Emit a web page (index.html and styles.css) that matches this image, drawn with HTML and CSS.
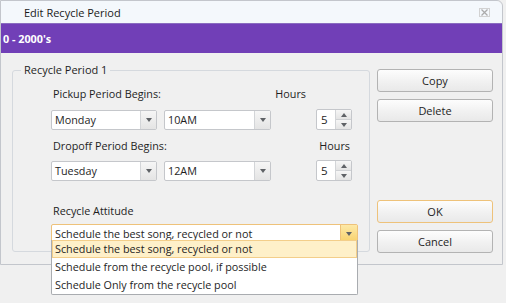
FILE: index.html
```html
<!DOCTYPE html>
<html>
<head>
<meta charset="utf-8">
<link rel="stylesheet" href="styles.css">
</head>
<body>
<div class="dialog">
  <div class="titlebar">
    <span class="title">Edit Recycle Period</span>
    <svg class="close" width="11" height="9" viewBox="0 0 11 9">
      <rect x="0.5" y="0.5" width="10" height="8" fill="none" stroke="#d2d2d2"/>
      <path d="M2.5 1.5 L8.5 7.5 M8.5 1.5 L2.5 7.5" stroke="#ababab" stroke-width="1.3"/>
    </svg>
  </div>
  <div class="banner">0 - 2000's</div>
  <div class="body">
    <fieldset class="group">
      <legend>Recycle Period 1</legend>
      <div class="inner">
        <div class="labels">
          <span class="lbl">Pickup Period Begins:</span>
          <span class="lbl hours-a">Hours</span>
        </div>
        <div class="controls">
          <div class="combo c1"><span class="val">Monday</span><span class="arrow"><i></i></span></div>
          <div class="combo c2"><span class="val">10AM</span><span class="arrow"><i></i></span></div>
          <div class="spin"><span class="val">5</span><span class="spinbtns"><span class="up"><i></i></span><span class="down"><i></i></span></span></div>
        </div>
        <div class="labels l2">
          <span class="lbl">Dropoff Period Begins:</span>
          <span class="lbl hours-b">Hours</span>
        </div>
        <div class="controls">
          <div class="combo c1"><span class="val">Tuesday</span><span class="arrow"><i></i></span></div>
          <div class="combo c2"><span class="val">12AM</span><span class="arrow"><i></i></span></div>
          <div class="spin"><span class="val">5</span><span class="spinbtns"><span class="up"><i></i></span><span class="down"><i></i></span></span></div>
        </div>
        <div class="labels l3">
          <span class="lbl">Recycle Attitude</span>
        </div>
        <div class="combo wide hot"><span class="val">Schedule the best song, recycled or not</span><span class="arrow"><i></i></span></div>
      </div>
    </fieldset>
    <div class="buttons">
      <button class="btn">Copy</button>
      <button class="btn">Delete</button>
      <div class="spacer"></div>
      <button class="btn default">OK</button>
      <button class="btn">Cancel</button>
    </div>
  </div>
</div>
<ul class="droplist">
  <li class="sel">Schedule the best song, recycled or not</li>
  <li>Schedule from the recycle pool, if possible</li>
  <li>Schedule Only from the recycle pool</li>
</ul>
</body>
</html>
```
FILE: styles.css
```css
* { box-sizing: border-box; }
html, body { margin: 0; padding: 0; }
body {
  width: 506px;
  height: 303px;
  background: #f0f0f0;
  font-family: "Open Sans", "Noto Sans", sans-serif;
  font-size: 10.8px;
  color: #1e1e1e;
  position: relative;
  overflow: hidden;
}
.dialog {
  width: 503px;
  border: 1px solid #c3c6cc;
  border-top-right-radius: 6px;
  background: #f0f0f0;
}
.titlebar {
  height: 22px;
  background: #f4f8fc;
  border-top-right-radius: 6px;
  display: flex;
  align-items: center;
  padding-left: 23px;
  padding-right: 12px;
  padding-top: 1px;
}
.title { flex: 1; font-size: 11px; color: #1a1a1a; }
.close { display: block; }
.banner {
  height: 30px;
  background: #713fb7;
  border-top: 1px solid #8a6cc0;
  color: #fff;
  font-weight: bold;
  padding-left: 2px;
  display: flex;
  align-items: center;
  font-size: 10.8px;
}
.body {
  display: flex;
  height: 211px;
  padding-left: 11px;
}
.group {
  margin: 9px 0 0 0;
  padding: 0;
  width: 358px;
  height: 190px;
  border: 1px solid #d5d9de;
  border-radius: 3px;
  min-width: 0;
}
.group legend {
  margin-left: 8px;
  padding: 0 3px;
  line-height: 16px;
  font-size: 11px;
}
.inner {
  padding: 8px 0 0 38px;
}
.labels {
  display: flex;
  width: 300px;
  line-height: 16px;
  padding-left: 2px;
}
.labels.l2 { margin-top: 8px; }
.labels.l3 { margin-top: 22px; }
.hours-a { margin-left: auto; margin-right: 45px; }
.hours-b { margin-left: auto; margin-right: 1px; }
.controls {
  display: flex;
  align-items: center;
  margin-top: 7px;
  margin-bottom: 0;
}
.labels.l2 + .controls { margin-top: 6px; }
.combo {
  display: flex;
  height: 20px;
  border: 1px solid #c5c7cb;
  border-radius: 2px;
  background: #fff;
}
.combo .val {
  flex: 1;
  padding-left: 3px;
  line-height: 18px;
  white-space: nowrap;
  overflow: hidden;
}
.combo .arrow {
  width: 16px;
  border-left: 1px solid #d3d5d8;
  background: linear-gradient(#f6f6f6, #e4e4e4);
  display: flex;
  align-items: center;
  justify-content: center;
}
.combo .arrow i, .spin .down i {
  display: block;
  width: 0; height: 0;
  border-left: 3.5px solid transparent;
  border-right: 3.5px solid transparent;
  border-top: 4px solid #5f6266;
}
.c1 { width: 106px; }
.c2 { width: 107px; margin-left: 7px; }
.spin {
  display: flex;
  width: 36px;
  height: 21px;
  margin-left: 45px;
  border: 1px solid #c5c7cb;
  border-radius: 2px;
  background: #fff;
}
.spin .val {
  width: 18px;
  padding-left: 4px;
  line-height: 19px;
  font-size: 11.5px;
}
.spinbtns {
  flex: 1;
  display: flex;
  flex-direction: column;
  border-left: 1px solid #d3d5d8;
}
.spinbtns span {
  flex: 1;
  display: flex;
  align-items: center;
  justify-content: center;
  background: linear-gradient(#f6f6f6, #e4e4e4);
}
.spinbtns .up { border-bottom: 1px solid #cfd1d4; }
.spin .up i {
  display: block;
  width: 0; height: 0;
  border-left: 3.5px solid transparent;
  border-right: 3.5px solid transparent;
  border-bottom: 4px solid #5f6266;
}
.combo.wide {
  width: 307px;
  height: 19px;
  margin-top: 5px;
}
.combo.wide .val { line-height: 17px; }
.combo.hot { border-color: #eec27a; }
.combo.hot .arrow {
  width: 17px;
  border-left: 1px solid #eec27a;
  background: linear-gradient(#fde9a8, #f8d16a);
}
.buttons {
  display: flex;
  flex-direction: column;
  width: 116px;
  margin-left: 7px;
  padding-top: 16px;
}
.btn {
  height: 23px;
  margin: 0 0 7px 0;
  border: 1px solid #b3b3b3;
  border-radius: 3px;
  background: linear-gradient(#fdfdfd, #f1f1f1 55%, #e9e9e9);
  font-family: inherit;
  font-size: 11px;
  color: #1e1e1e;
  padding: 0;
}
.btn.default {
  border-color: #eec27a;
}
.spacer { height: 71px; }
.droplist {
  position: absolute;
  left: 51px;
  top: 240px;
  width: 307px;
  margin: 0;
  padding: 0;
  list-style: none;
  background: #fff;
  border: 1px solid #a9acb0;
  border-top: none;
  border-radius: 0 0 2px 2px;
}
.droplist li {
  height: 18px;
  line-height: 16px;
  padding-left: 2px;
  border: 1px solid transparent;
  white-space: nowrap;
}
.droplist li.sel {
  background: #fef0c9;
  border-color: #f3ce8a;
}
```
